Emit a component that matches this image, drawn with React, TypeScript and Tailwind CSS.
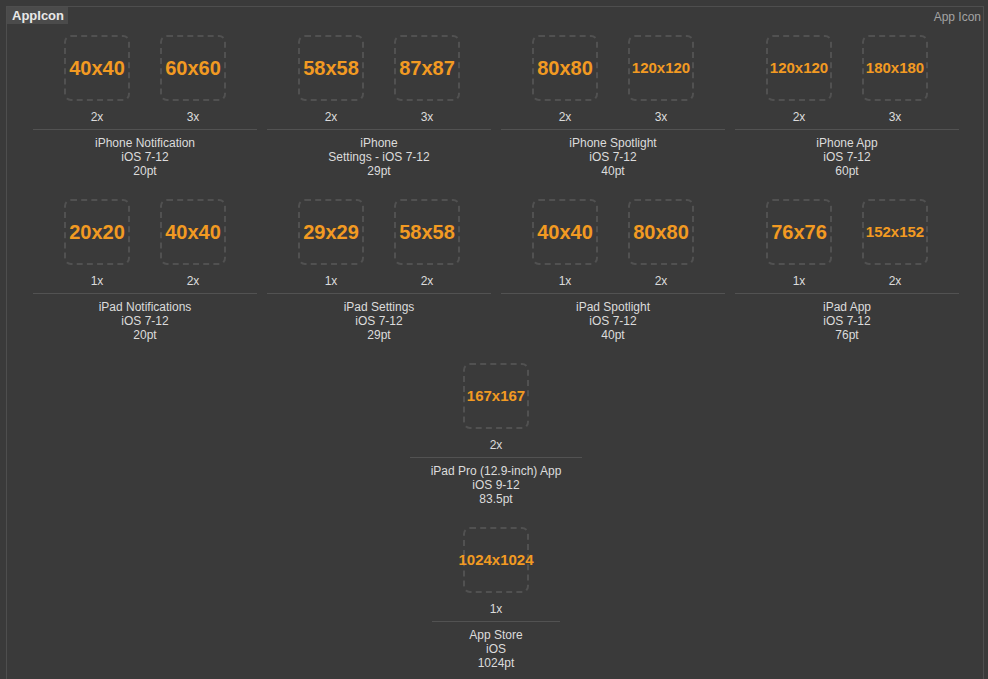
import React from "react";

type Group = { sizes: string[]; scales: string[]; lines: string[] };

const row1: Group[] = [
  { sizes: ["40x40", "60x60"], scales: ["2x", "3x"], lines: ["iPhone Notification", "iOS 7-12", "20pt"] },
  { sizes: ["58x58", "87x87"], scales: ["2x", "3x"], lines: ["iPhone", "Settings - iOS 7-12", "29pt"] },
  { sizes: ["80x80", "120x120"], scales: ["2x", "3x"], lines: ["iPhone Spotlight", "iOS 7-12", "40pt"] },
  { sizes: ["120x120", "180x180"], scales: ["2x", "3x"], lines: ["iPhone App", "iOS 7-12", "60pt"] },
];

const row2: Group[] = [
  { sizes: ["20x20", "40x40"], scales: ["1x", "2x"], lines: ["iPad Notifications", "iOS 7-12", "20pt"] },
  { sizes: ["29x29", "58x58"], scales: ["1x", "2x"], lines: ["iPad Settings", "iOS 7-12", "29pt"] },
  { sizes: ["40x40", "80x80"], scales: ["1x", "2x"], lines: ["iPad Spotlight", "iOS 7-12", "40pt"] },
  { sizes: ["76x76", "152x152"], scales: ["1x", "2x"], lines: ["iPad App", "iOS 7-12", "76pt"] },
];

function Slot({ size, scale }: { size: string; scale: string }) {
  const big = size.length <= 5;
  return (
    <div className="flex w-[66px] flex-col items-center">
      <div className="flex h-[66px] w-[66px] items-center justify-center rounded-[7px] border-2 border-dashed border-[#515151]">
        <span
          className={
            big
              ? "mb-[1px] whitespace-nowrap text-[20px] font-bold leading-none text-[#f29a22]"
              : "mb-[1px] whitespace-nowrap text-[15px] font-bold leading-none text-[#f29a22]"
          }
        >
          {size}
        </span>
      </div>
      <div className="mt-[9px] text-[12px] leading-[14px] text-[#dcdcdc]">{scale}</div>
    </div>
  );
}

function GroupView({ g, sep }: { g: Group; sep: string }) {
  return (
    <div className="flex flex-col items-center pb-[21px]">
      <div className="flex gap-[30px]">
        {g.sizes.map((s, i) => (
          <Slot key={i} size={s} scale={g.scales[i]} />
        ))}
      </div>
      <div className={`mt-[5px] h-px bg-[#525252] ${sep}`} />
      <div className="mt-[6px] flex flex-col items-center text-[12px] leading-[14px] text-[#dcdcdc]">
        {g.lines.map((l, i) => (
          <div key={i} className="whitespace-nowrap">
            {l}
          </div>
        ))}
      </div>
    </div>
  );
}

export default function App() {
  return (
    <div
      className="h-[679px] w-[988px] overflow-hidden bg-[#3a3a3a] pl-[6px] pt-[6px]"
      style={{ fontFamily: '"Liberation Sans", Arial, sans-serif' }}
    >
      <div className="h-[720px] w-[978px] border border-[#4e4e4e]">
        <div className="flex h-[17px] items-center justify-between">
          <div className="flex h-[17px] items-center bg-[#4b4b4b] pl-[5px] pr-[4px] text-[13px] font-bold text-[#e8e8e8]">
            AppIcon
          </div>
          <div className="pr-[2px] pt-[2px] text-[12px] text-[#a3a3a3]">App Icon</div>
        </div>
        <div className="mt-[11px] pl-[21px]">
          <div className="grid w-[936px] grid-cols-4">
            {row1.map((g, i) => (
              <GroupView key={i} g={g} sep="w-[224px]" />
            ))}
            {row2.map((g, i) => (
              <GroupView key={i} g={g} sep="w-[224px]" />
            ))}
          </div>
          <div className="flex w-[936px] flex-col items-center">
            <GroupView
              g={{ sizes: ["167x167"], scales: ["2x"], lines: ["iPad Pro (12.9-inch) App", "iOS 9-12", "83.5pt"] }}
              sep="w-[172px]"
            />
            <GroupView
              g={{ sizes: ["1024x1024"], scales: ["1x"], lines: ["App Store", "iOS", "1024pt"] }}
              sep="w-[128px]"
            />
          </div>
        </div>
      </div>
    </div>
  );
}
